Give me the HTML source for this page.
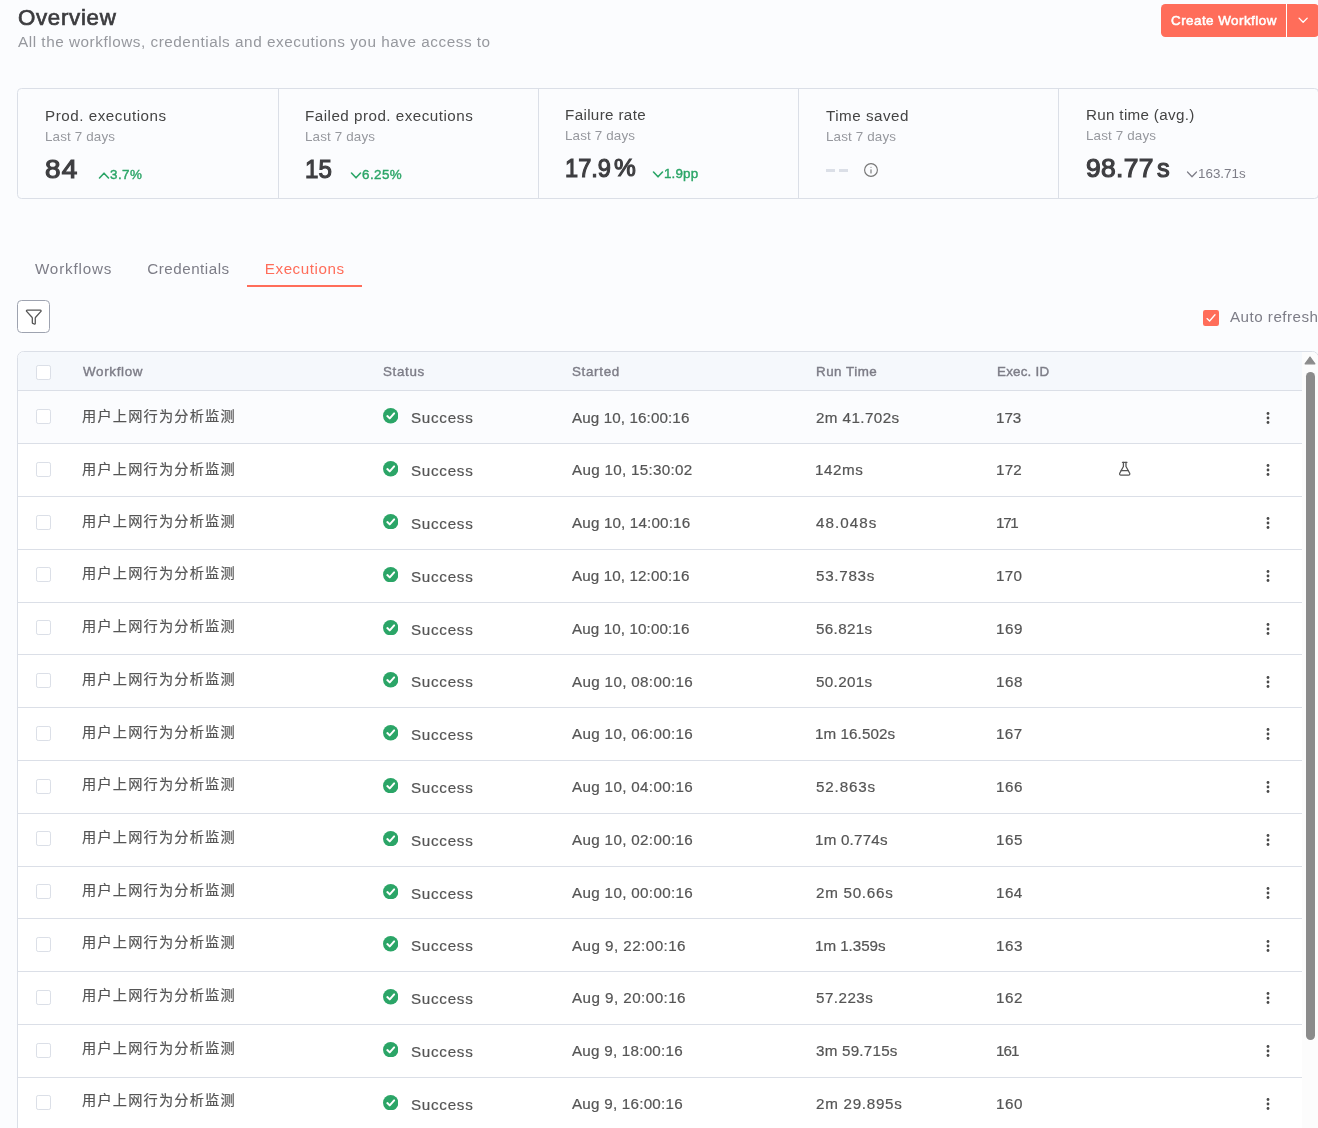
<!DOCTYPE html>
<html lang="en">
<head>
<meta charset="utf-8">
<title>Overview - Executions</title>
<style>
*{box-sizing:border-box;}
html,body{margin:0;padding:0;}
body{width:1318px;height:1128px;overflow:hidden;position:relative;background:#fbfcfe;
  font-family:"Liberation Sans","Noto Sans CJK SC",sans-serif;color:#555;-webkit-font-smoothing:antialiased;}
svg{display:block;}
.app{position:absolute;left:0;top:0;width:1318px;height:1128px;overflow:hidden;will-change:transform;}

/* ---------- header ---------- */
.page-head{position:absolute;left:18px;top:0;right:0;height:60px;}
.page-head h1{position:absolute;left:0;top:5px;margin:0;font-size:22.3px;line-height:26px;font-weight:normal;-webkit-text-stroke:0.7px #3c3c3f;color:#3c3c3f;letter-spacing:0.69px;white-space:nowrap;}
.page-head p{position:absolute;left:0;top:32px;margin:0;font-size:15.3px;line-height:20px;color:#96989e;letter-spacing:0.53px;white-space:nowrap;}
.create{position:absolute;left:1161px;top:4px;width:158px;height:33px;background:#ff6d5a;border-radius:4.4px;color:#fff;display:flex;}
.create .main{flex:none;width:126px;height:33px;border-right:1px solid #fff;font-size:13.4px;font-weight:normal;-webkit-text-stroke:0.55px #fff;letter-spacing:.47px;line-height:33px;padding-left:10px;white-space:nowrap;}
.create .drop{flex:none;width:32px;height:33px;position:relative;}
.create .drop svg{position:absolute;left:8.2px;top:8.45px;}

/* ---------- stats ---------- */
.stats{position:absolute;left:17px;top:88px;width:1302px;height:111px;border:1px solid #dbdfe7;border-radius:4.4px;display:flex;}
.stat{flex:none;width:260px;position:relative;border-right:1px solid #dbdfe7;}
.stat:first-child{width:261px;}
.stat.s3 > *,.stat.s5 > *{margin-top:-1px;}
.stat.s2 > *,.stat.s3 > *{margin-left:-1px;}
.stat:last-child{border-right:0;}
.stat .t{position:absolute;left:27px;top:17px;font-size:15.2px;line-height:20px;color:#444;white-space:nowrap;}
.stat .s{position:absolute;left:27px;top:39px;font-size:13.4px;line-height:18px;color:#96989e;letter-spacing:0.15px;white-space:nowrap;}
.stat .v{position:absolute;left:27px;top:64px;font-size:25.4px;line-height:32px;font-weight:normal;-webkit-text-stroke:1.15px #3e3e41;color:#3e3e41;white-space:nowrap;}
.stat .d{position:absolute;top:77px;font-size:13.4px;line-height:18px;font-weight:normal;-webkit-text-stroke:0.4px #2ba567;color:#2ba567;white-space:nowrap;display:flex;align-items:center;}
.stat .d.grey{color:#7d7d87;font-weight:normal;-webkit-text-stroke:0;}

/* ---------- tabs ---------- */
.tabs{position:absolute;left:17.4px;top:250px;height:37px;display:flex;}
.tab{font-size:15.2px;line-height:20px;color:#7d7d87;padding:9px 17.6px 6px 17.6px;height:37px;white-space:nowrap;border-bottom:2px solid transparent;}
.tab.active{color:#ff6d5a;border-bottom-color:#ff6d5a;}

/* ---------- filters ---------- */
.filter-btn{position:absolute;left:17px;top:300px;width:33px;height:33px;border:1px solid #9ea3b0;border-radius:4.4px;background:#fff;}
.filter-btn svg{position:absolute;left:6.8px;top:6.8px;}
.auto{position:absolute;left:1203px;top:306px;height:24px;display:flex;align-items:center;white-space:nowrap;font-size:15.2px;letter-spacing:0.48px;color:#7d7d87;}
.auto .lbl{position:relative;top:-1.5px;}
.auto .cb{width:16px;height:16px;background:#ff6d5a;border-radius:2.2px;margin-right:11px;position:relative;flex:none;}

/* ---------- table ---------- */
.tablewrap{position:absolute;left:17px;top:351px;width:1302px;height:800px;border:1px solid #dbdfe7;border-radius:6.6px 6.6px 0 0;background:#fff;overflow:hidden;}
.thead{height:39.35px;background:#f5f8fc;border-bottom:1px solid #dbdfe7;position:relative;width:1284px;}
.row{height:52.8px;border-bottom:1px solid #dbdfe7;position:relative;width:1284px;background:#fff;}
.row.hover{background:#fbfcfe;}
.c{position:absolute;top:0;height:100%;display:flex;align-items:center;white-space:nowrap;}
.thead .c{font-size:13.4px;font-weight:normal;-webkit-text-stroke:0.4px #7d7d87;color:#7d7d87;letter-spacing:.67px;}
.thead .c4{letter-spacing:.49px}.thead .c5{letter-spacing:.21px}
.row .c{font-size:15.2px;line-height:20px;color:#555;-webkit-text-stroke:0.2px #555;}
.chk{position:absolute;left:18px;width:15px;height:15px;border:1px solid #dbdfe7;border-radius:2.2px;background:#fff;}
.scroll{position:absolute;left:1284px;top:0;width:17px;height:100%;background:#fcfcfc;}

.c1{left:65px;} .c2{left:365px;} .c3{left:554px;} .c4{left:798px;} .c5{left:979px;} .c6{left:1099px;padding-bottom:2px;} .c7{left:1247.7px;padding-top:0.6px;}
.thead .chk{top:13px;}.row .chk{top:17.6px;}
.ok{margin-right:13px;flex:none;}
.chev{flex:none;margin-right:0px;margin-top:1.5px;}

.stat .dash{top:80px;display:flex;gap:3.6px;}
.stat .dash i{display:block;width:9px;height:3.2px;background:#dbdfe7;}
.stat .info{position:absolute;left:63.7px;top:72.8px;}
.scroll .arrow{position:absolute;left:2px;top:3.8px;}
.scroll .thumb{position:absolute;left:4px;top:20px;width:9px;height:668px;border-radius:4.5px;background:#8b8b8b;}

.s1 .t{letter-spacing:.53px}.s2 .t{letter-spacing:.49px}.s3 .t{letter-spacing:.35px}.s4 .t{letter-spacing:.5px}.s5 .t{letter-spacing:.32px}
.stat .n{display:inline-block;transform-origin:0 50%;}
.s1 .n{letter-spacing:1.2px;transform:scaleX(1.1)}.s2 .n{transform:scaleX(.95)}.s3 .n{transform:scaleX(.93)}.s5 .n{letter-spacing:.3px;transform:scaleX(1.04)}
.stat .u{position:absolute;top:0;}.s3 .u{left:49px;font-size:24.5px;}.s5 .u{left:71px;}
.s1 .d span,.s2 .d span{letter-spacing:.45px}.s3 .d span{letter-spacing:.15px}
.tab.t1{letter-spacing:.82px}.tab.t2{letter-spacing:.5px}.tab.t3{letter-spacing:.54px}
.st{letter-spacing:.75px;margin-left:-0.5px;}
.row .c3{letter-spacing:-.15px}
.row .c5{letter-spacing:-.7px}
.row .wf{font-size:14.2px;letter-spacing:1.2px;padding-bottom:3px;margin-left:-1px;}
.row .c2,.row .c3,.row .c4,.row .c5{padding-top:2.4px;}
.row .c3,.row .c4,.row .c5{padding-top:0.8px}
.row .ok{margin-top:-4.6px;}
</style>
</head>
<body>
<div class="app">

<header class="page-head">
  <h1>Overview</h1>
  <p>All the workflows, credentials and executions you have access to</p>
</header>
<div class="create">
  <div class="main">Create Workflow</div>
  <div class="drop"><svg width="16.3" height="16.3" viewBox="0 0 24 24" fill="none" stroke="#fff" stroke-width="2" stroke-linecap="round" stroke-linejoin="round"><path d="m6 9 6 6 6-6"/></svg></div>
</div>

<section class="stats">
  <div class="stat s1"><div class="t">Prod. executions</div><div class="s">Last 7 days</div><div class="v"><span class="n">84</span></div><div class="d" style="left:80px"><svg class="chev" width="12" height="9" viewBox="0 0 12 9" fill="none" stroke="currentColor" stroke-width="1.6" stroke-linecap="round" stroke-linejoin="round"><path d="M1.5 7 6 2.2 10.5 7"/></svg><span>3.7%</span></div></div>
  <div class="stat s2"><div class="t">Failed prod. executions</div><div class="s">Last 7 days</div><div class="v"><span class="n">15</span></div><div class="d" style="left:72px"><svg class="chev" width="12" height="9" viewBox="0 0 12 9" fill="none" stroke="currentColor" stroke-width="1.6" stroke-linecap="round" stroke-linejoin="round"><path d="M1.5 2 6 6.8 10.5 2"/></svg><span>6.25%</span></div></div>
  <div class="stat s3"><div class="t">Failure rate</div><div class="s">Last 7 days</div><div class="v"><span class="n">17.9</span><span class="u">%</span></div><div class="d" style="left:114px"><svg class="chev" width="12" height="9" viewBox="0 0 12 9" fill="none" stroke="currentColor" stroke-width="1.6" stroke-linecap="round" stroke-linejoin="round"><path d="M1.5 2 6 6.8 10.5 2"/></svg><span>1.9pp</span></div></div>
  <div class="stat s4"><div class="t">Time saved</div><div class="s">Last 7 days</div><div class="v dash"><i></i><i></i></div><svg class="info" width="16" height="16" viewBox="0 0 24 24" fill="none" stroke="#777" stroke-width="1.7" stroke-linecap="round" stroke-linejoin="round"><circle cx="12" cy="12" r="9.6"/><path d="M12 16.4v-4.6"/><path d="M12 7.8h.01"/></svg></div>
  <div class="stat s5"><div class="t">Run time (avg.)</div><div class="s">Last 7 days</div><div class="v"><span class="n">98.77</span><span class="u">s</span></div><div class="d grey" style="left:127px"><svg class="chev" width="12" height="9" viewBox="0 0 12 9" fill="none" stroke="currentColor" stroke-width="1.25" stroke-linecap="round" stroke-linejoin="round"><path d="M1.5 2 6 6.8 10.5 2"/></svg><span>163.71s</span></div></div>
</section>

<nav class="tabs">
  <div class="tab t1">Workflows</div>
  <div class="tab t2">Credentials</div>
  <div class="tab t3 active">Executions</div>
</nav>

<div class="filter-btn"><svg width="17.6" height="17.6" viewBox="0 0 24 24" fill="none" stroke="#555" stroke-width="1.75" stroke-linecap="round" stroke-linejoin="round"><path d="M10 20a1 1 0 0 0 .553.895l2 1A1 1 0 0 0 14 21v-7a2 2 0 0 1 .517-1.341L21.74 4.67A1 1 0 0 0 21 3H3a1 1 0 0 0-.742 1.67l7.225 7.989A2 2 0 0 1 10 14z"/></svg></div>
<div class="auto"><span class="cb"><svg width="16" height="16" viewBox="0 0 16 16" fill="none" stroke="#fff" stroke-width="1.3" stroke-linecap="round" stroke-linejoin="round"><path d="M4 8.6 6.6 11 12 4.8"/></svg></span><span class="lbl">Auto refresh</span></div>

<div class="tablewrap">
  <div class="thead"><span class="chk"></span><div class="c c1">Workflow</div><div class="c c2">Status</div><div class="c c3">Started</div><div class="c c4">Run Time</div><div class="c c5">Exec. ID</div></div>
  <div class="row hover"><span class="chk"></span><div class="c c1 wf">用户上网行为分析监测</div><div class="c c2"><svg class="ok" width="15.4" height="15.4" viewBox="0 0 16 16"><circle cx="8" cy="8" r="8" fill="#2ba567"/><path d="M4.5 8.4 7 10.8 11.6 5.6" fill="none" stroke="#fff" stroke-width="2.1" stroke-linecap="round" stroke-linejoin="round"/></svg><span class="st">Success</span></div><div class="c c3" style="letter-spacing:0.11px">Aug 10, 16:00:16</div><div class="c c4" style="letter-spacing:0.42px">2m 41.702s</div><div class="c c5" style="letter-spacing:-0.03px;margin-left:-1px">173</div><div class="c c7"><svg class="kebab" width="4" height="14" viewBox="0 0 4 14"><circle cx="2" cy="2.5" r="1.4" fill="#4a4a4a"/><circle cx="2" cy="7" r="1.4" fill="#4a4a4a"/><circle cx="2" cy="11.5" r="1.4" fill="#4a4a4a"/></svg></div></div>
  <div class="row"><span class="chk"></span><div class="c c1 wf">用户上网行为分析监测</div><div class="c c2"><svg class="ok" width="15.4" height="15.4" viewBox="0 0 16 16"><circle cx="8" cy="8" r="8" fill="#2ba567"/><path d="M4.5 8.4 7 10.8 11.6 5.6" fill="none" stroke="#fff" stroke-width="2.1" stroke-linecap="round" stroke-linejoin="round"/></svg><span class="st">Success</span></div><div class="c c3" style="letter-spacing:0.3px">Aug 10, 15:30:02</div><div class="c c4" style="letter-spacing:0.59px;margin-left:-1px">142ms</div><div class="c c5" style="letter-spacing:0.21px;margin-left:-1px">172</div><div class="c c6"><svg class="flask" width="15.4" height="15.4" viewBox="0 0 24 24" fill="none" stroke="#555" stroke-width="2" stroke-linecap="round" stroke-linejoin="round"><path d="M14 2v6a2 2 0 0 0 .245.96l5.51 10.08A2 2 0 0 1 18 22H6a2 2 0 0 1-1.755-2.96l5.51-10.08A2 2 0 0 0 10 8V2"/><path d="M6.453 15h11.094"/><path d="M8.5 2h7"/></svg></div><div class="c c7"><svg class="kebab" width="4" height="14" viewBox="0 0 4 14"><circle cx="2" cy="2.5" r="1.4" fill="#4a4a4a"/><circle cx="2" cy="7" r="1.4" fill="#4a4a4a"/><circle cx="2" cy="11.5" r="1.4" fill="#4a4a4a"/></svg></div></div>
  <div class="row"><span class="chk"></span><div class="c c1 wf">用户上网行为分析监测</div><div class="c c2"><svg class="ok" width="15.4" height="15.4" viewBox="0 0 16 16"><circle cx="8" cy="8" r="8" fill="#2ba567"/><path d="M4.5 8.4 7 10.8 11.6 5.6" fill="none" stroke="#fff" stroke-width="2.1" stroke-linecap="round" stroke-linejoin="round"/></svg><span class="st">Success</span></div><div class="c c3" style="letter-spacing:0.16px">Aug 10, 14:00:16</div><div class="c c4" style="letter-spacing:1.05px">48.048s</div><div class="c c5" style="letter-spacing:-1.29px;margin-left:-1px">171</div><div class="c c7"><svg class="kebab" width="4" height="14" viewBox="0 0 4 14"><circle cx="2" cy="2.5" r="1.4" fill="#4a4a4a"/><circle cx="2" cy="7" r="1.4" fill="#4a4a4a"/><circle cx="2" cy="11.5" r="1.4" fill="#4a4a4a"/></svg></div></div>
  <div class="row"><span class="chk"></span><div class="c c1 wf" style="margin-top:-1px">用户上网行为分析监测</div><div class="c c2"><svg class="ok" width="15.4" height="15.4" viewBox="0 0 16 16"><circle cx="8" cy="8" r="8" fill="#2ba567"/><path d="M4.5 8.4 7 10.8 11.6 5.6" fill="none" stroke="#fff" stroke-width="2.1" stroke-linecap="round" stroke-linejoin="round"/></svg><span class="st">Success</span></div><div class="c c3" style="letter-spacing:0.11px">Aug 10, 12:00:16</div><div class="c c4" style="letter-spacing:0.72px">53.783s</div><div class="c c5" style="letter-spacing:0.33px;margin-left:-1px">170</div><div class="c c7"><svg class="kebab" width="4" height="14" viewBox="0 0 4 14"><circle cx="2" cy="2.5" r="1.4" fill="#4a4a4a"/><circle cx="2" cy="7" r="1.4" fill="#4a4a4a"/><circle cx="2" cy="11.5" r="1.4" fill="#4a4a4a"/></svg></div></div>
  <div class="row"><span class="chk"></span><div class="c c1 wf" style="margin-top:-1px">用户上网行为分析监测</div><div class="c c2"><svg class="ok" width="15.4" height="15.4" viewBox="0 0 16 16"><circle cx="8" cy="8" r="8" fill="#2ba567"/><path d="M4.5 8.4 7 10.8 11.6 5.6" fill="none" stroke="#fff" stroke-width="2.1" stroke-linecap="round" stroke-linejoin="round"/></svg><span class="st">Success</span></div><div class="c c3" style="letter-spacing:0.11px">Aug 10, 10:00:16</div><div class="c c4" style="letter-spacing:0.34px">56.821s</div><div class="c c5" style="letter-spacing:0.61px;margin-left:-1px">169</div><div class="c c7"><svg class="kebab" width="4" height="14" viewBox="0 0 4 14"><circle cx="2" cy="2.5" r="1.4" fill="#4a4a4a"/><circle cx="2" cy="7" r="1.4" fill="#4a4a4a"/><circle cx="2" cy="11.5" r="1.4" fill="#4a4a4a"/></svg></div></div>
  <div class="row"><span class="chk"></span><div class="c c1 wf" style="margin-top:-1px">用户上网行为分析监测</div><div class="c c2"><svg class="ok" width="15.4" height="15.4" viewBox="0 0 16 16"><circle cx="8" cy="8" r="8" fill="#2ba567"/><path d="M4.5 8.4 7 10.8 11.6 5.6" fill="none" stroke="#fff" stroke-width="2.1" stroke-linecap="round" stroke-linejoin="round"/></svg><span class="st">Success</span></div><div class="c c3" style="letter-spacing:0.34px">Aug 10, 08:00:16</div><div class="c c4" style="letter-spacing:0.34px">50.201s</div><div class="c c5" style="letter-spacing:0.57px;margin-left:-1px">168</div><div class="c c7"><svg class="kebab" width="4" height="14" viewBox="0 0 4 14"><circle cx="2" cy="2.5" r="1.4" fill="#4a4a4a"/><circle cx="2" cy="7" r="1.4" fill="#4a4a4a"/><circle cx="2" cy="11.5" r="1.4" fill="#4a4a4a"/></svg></div></div>
  <div class="row"><span class="chk"></span><div class="c c1 wf" style="margin-top:-1px">用户上网行为分析监测</div><div class="c c2"><svg class="ok" width="15.4" height="15.4" viewBox="0 0 16 16"><circle cx="8" cy="8" r="8" fill="#2ba567"/><path d="M4.5 8.4 7 10.8 11.6 5.6" fill="none" stroke="#fff" stroke-width="2.1" stroke-linecap="round" stroke-linejoin="round"/></svg><span class="st">Success</span></div><div class="c c3" style="letter-spacing:0.34px">Aug 10, 06:00:16</div><div class="c c4" style="letter-spacing:0.08px;margin-left:-1px">1m 16.502s</div><div class="c c5" style="letter-spacing:0.41px;margin-left:-1px">167</div><div class="c c7"><svg class="kebab" width="4" height="14" viewBox="0 0 4 14"><circle cx="2" cy="2.5" r="1.4" fill="#4a4a4a"/><circle cx="2" cy="7" r="1.4" fill="#4a4a4a"/><circle cx="2" cy="11.5" r="1.4" fill="#4a4a4a"/></svg></div></div>
  <div class="row"><span class="chk"></span><div class="c c1 wf" style="margin-top:-1px">用户上网行为分析监测</div><div class="c c2"><svg class="ok" width="15.4" height="15.4" viewBox="0 0 16 16"><circle cx="8" cy="8" r="8" fill="#2ba567"/><path d="M4.5 8.4 7 10.8 11.6 5.6" fill="none" stroke="#fff" stroke-width="2.1" stroke-linecap="round" stroke-linejoin="round"/></svg><span class="st">Success</span></div><div class="c c3" style="letter-spacing:0.34px">Aug 10, 04:00:16</div><div class="c c4" style="letter-spacing:0.84px">52.863s</div><div class="c c5" style="letter-spacing:0.57px;margin-left:-1px">166</div><div class="c c7"><svg class="kebab" width="4" height="14" viewBox="0 0 4 14"><circle cx="2" cy="2.5" r="1.4" fill="#4a4a4a"/><circle cx="2" cy="7" r="1.4" fill="#4a4a4a"/><circle cx="2" cy="11.5" r="1.4" fill="#4a4a4a"/></svg></div></div>
  <div class="row"><span class="chk"></span><div class="c c1 wf" style="margin-top:-1px">用户上网行为分析监测</div><div class="c c2"><svg class="ok" width="15.4" height="15.4" viewBox="0 0 16 16"><circle cx="8" cy="8" r="8" fill="#2ba567"/><path d="M4.5 8.4 7 10.8 11.6 5.6" fill="none" stroke="#fff" stroke-width="2.1" stroke-linecap="round" stroke-linejoin="round"/></svg><span class="st">Success</span></div><div class="c c3" style="letter-spacing:0.34px">Aug 10, 02:00:16</div><div class="c c4" style="letter-spacing:0.2px;margin-left:-1px">1m 0.774s</div><div class="c c5" style="letter-spacing:0.57px;margin-left:-1px">165</div><div class="c c7"><svg class="kebab" width="4" height="14" viewBox="0 0 4 14"><circle cx="2" cy="2.5" r="1.4" fill="#4a4a4a"/><circle cx="2" cy="7" r="1.4" fill="#4a4a4a"/><circle cx="2" cy="11.5" r="1.4" fill="#4a4a4a"/></svg></div></div>
  <div class="row"><span class="chk"></span><div class="c c1 wf" style="margin-top:-1px">用户上网行为分析监测</div><div class="c c2"><svg class="ok" width="15.4" height="15.4" viewBox="0 0 16 16"><circle cx="8" cy="8" r="8" fill="#2ba567"/><path d="M4.5 8.4 7 10.8 11.6 5.6" fill="none" stroke="#fff" stroke-width="2.1" stroke-linecap="round" stroke-linejoin="round"/></svg><span class="st">Success</span></div><div class="c c3" style="letter-spacing:0.34px">Aug 10, 00:00:16</div><div class="c c4" style="letter-spacing:0.73px">2m 50.66s</div><div class="c c5" style="letter-spacing:0.46px;margin-left:-1px">164</div><div class="c c7"><svg class="kebab" width="4" height="14" viewBox="0 0 4 14"><circle cx="2" cy="2.5" r="1.4" fill="#4a4a4a"/><circle cx="2" cy="7" r="1.4" fill="#4a4a4a"/><circle cx="2" cy="11.5" r="1.4" fill="#4a4a4a"/></svg></div></div>
  <div class="row"><span class="chk"></span><div class="c c1 wf" style="margin-top:-2px">用户上网行为分析监测</div><div class="c c2"><svg class="ok" width="15.4" height="15.4" viewBox="0 0 16 16"><circle cx="8" cy="8" r="8" fill="#2ba567"/><path d="M4.5 8.4 7 10.8 11.6 5.6" fill="none" stroke="#fff" stroke-width="2.1" stroke-linecap="round" stroke-linejoin="round"/></svg><span class="st">Success</span></div><div class="c c3" style="letter-spacing:0.45px">Aug 9, 22:00:16</div><div class="c c4" style="letter-spacing:-0.04px;margin-left:-1px">1m 1.359s</div><div class="c c5" style="letter-spacing:0.57px;margin-left:-1px">163</div><div class="c c7"><svg class="kebab" width="4" height="14" viewBox="0 0 4 14"><circle cx="2" cy="2.5" r="1.4" fill="#4a4a4a"/><circle cx="2" cy="7" r="1.4" fill="#4a4a4a"/><circle cx="2" cy="11.5" r="1.4" fill="#4a4a4a"/></svg></div></div>
  <div class="row"><span class="chk"></span><div class="c c1 wf" style="margin-top:-2px">用户上网行为分析监测</div><div class="c c2"><svg class="ok" width="15.4" height="15.4" viewBox="0 0 16 16"><circle cx="8" cy="8" r="8" fill="#2ba567"/><path d="M4.5 8.4 7 10.8 11.6 5.6" fill="none" stroke="#fff" stroke-width="2.1" stroke-linecap="round" stroke-linejoin="round"/></svg><span class="st">Success</span></div><div class="c c3" style="letter-spacing:0.45px">Aug 9, 20:00:16</div><div class="c c4" style="letter-spacing:0.47px">57.223s</div><div class="c c5" style="letter-spacing:0.61px;margin-left:-1px">162</div><div class="c c7"><svg class="kebab" width="4" height="14" viewBox="0 0 4 14"><circle cx="2" cy="2.5" r="1.4" fill="#4a4a4a"/><circle cx="2" cy="7" r="1.4" fill="#4a4a4a"/><circle cx="2" cy="11.5" r="1.4" fill="#4a4a4a"/></svg></div></div>
  <div class="row"><span class="chk"></span><div class="c c1 wf" style="margin-top:-1px">用户上网行为分析监测</div><div class="c c2"><svg class="ok" width="15.4" height="15.4" viewBox="0 0 16 16"><circle cx="8" cy="8" r="8" fill="#2ba567"/><path d="M4.5 8.4 7 10.8 11.6 5.6" fill="none" stroke="#fff" stroke-width="2.1" stroke-linecap="round" stroke-linejoin="round"/></svg><span class="st">Success</span></div><div class="c c3" style="letter-spacing:0.24px">Aug 9, 18:00:16</div><div class="c c4" style="letter-spacing:0.23px">3m 59.715s</div><div class="c c5" style="letter-spacing:-0.94px;margin-left:-1px">161</div><div class="c c7"><svg class="kebab" width="4" height="14" viewBox="0 0 4 14"><circle cx="2" cy="2.5" r="1.4" fill="#4a4a4a"/><circle cx="2" cy="7" r="1.4" fill="#4a4a4a"/><circle cx="2" cy="11.5" r="1.4" fill="#4a4a4a"/></svg></div></div>
  <div class="row"><span class="chk"></span><div class="c c1 wf" style="margin-top:-2px">用户上网行为分析监测</div><div class="c c2"><svg class="ok" width="15.4" height="15.4" viewBox="0 0 16 16"><circle cx="8" cy="8" r="8" fill="#2ba567"/><path d="M4.5 8.4 7 10.8 11.6 5.6" fill="none" stroke="#fff" stroke-width="2.1" stroke-linecap="round" stroke-linejoin="round"/></svg><span class="st">Success</span></div><div class="c c3" style="letter-spacing:0.24px">Aug 9, 16:00:16</div><div class="c c4" style="letter-spacing:0.72px">2m 29.895s</div><div class="c c5" style="letter-spacing:0.53px;margin-left:-1px">160</div><div class="c c7"><svg class="kebab" width="4" height="14" viewBox="0 0 4 14"><circle cx="2" cy="2.5" r="1.4" fill="#4a4a4a"/><circle cx="2" cy="7" r="1.4" fill="#4a4a4a"/><circle cx="2" cy="11.5" r="1.4" fill="#4a4a4a"/></svg></div></div>
  <div class="row"><span class="chk"></span><div class="c c1 wf" style="margin-top:-2px">用户上网行为分析监测</div><div class="c c2"><svg class="ok" width="15.4" height="15.4" viewBox="0 0 16 16"><circle cx="8" cy="8" r="8" fill="#2ba567"/><path d="M4.5 8.4 7 10.8 11.6 5.6" fill="none" stroke="#fff" stroke-width="2.1" stroke-linecap="round" stroke-linejoin="round"/></svg><span class="st">Success</span></div><div class="c c3" style="letter-spacing:0.29px">Aug 9, 14:00:16</div><div class="c c4" style="letter-spacing:0.34px">51.337s</div><div class="c c5" style="letter-spacing:0.61px;margin-left:-1px">159</div><div class="c c7"><svg class="kebab" width="4" height="14" viewBox="0 0 4 14"><circle cx="2" cy="2.5" r="1.4" fill="#4a4a4a"/><circle cx="2" cy="7" r="1.4" fill="#4a4a4a"/><circle cx="2" cy="11.5" r="1.4" fill="#4a4a4a"/></svg></div></div>
  <div class="scroll"><svg class="arrow" width="12" height="9" viewBox="0 0 12 9"><path d="M6 1 10.9 7.8H1.1z" fill="#8b8b8b" stroke="#8b8b8b" stroke-width="1.2" stroke-linejoin="round"/></svg><div class="thumb"></div></div>
</div>

</div>
</body>
</html>
